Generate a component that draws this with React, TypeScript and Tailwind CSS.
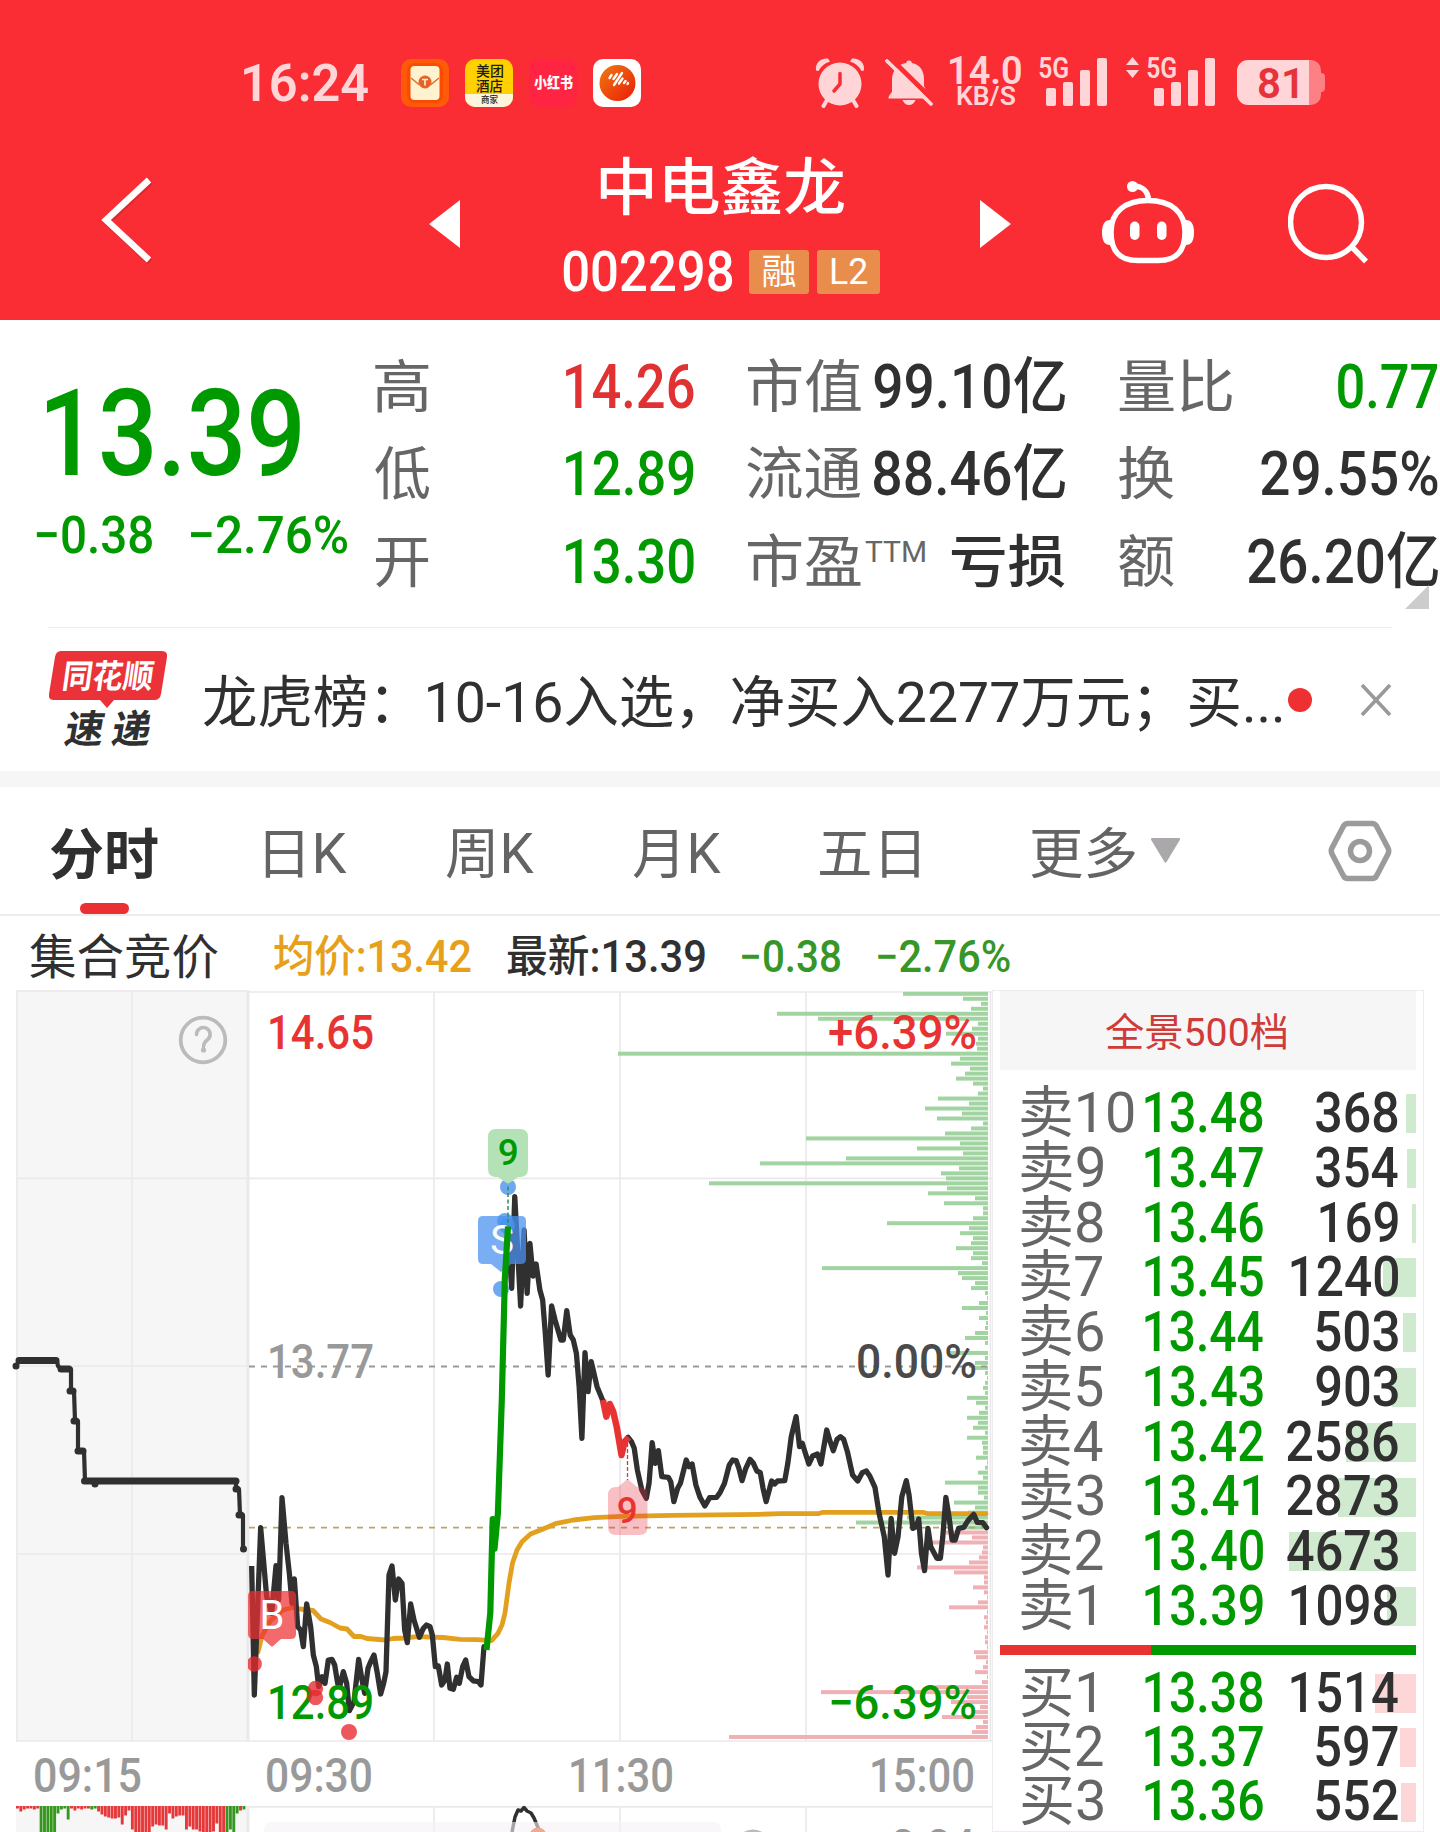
import React, { useLayoutEffect, useRef } from 'react';

const GREEN = '#009900';
const RED = '#e83333';
const INK = '#303030';

// Stretches a single line so that its visible glyphs fill the box width
function Fit({ children, className }: { children: string; className: string }) {
  const boxRef = useRef<HTMLDivElement>(null);
  const textRef = useRef<HTMLSpanElement>(null);

  useLayoutEffect(() => {
    const box = boxRef.current;
    const text = textRef.current;
    const ctx = document.createElement('canvas').getContext('2d');
    if (!box || !text || !ctx) return;
    const style = getComputedStyle(text);
    ctx.font = `${style.fontWeight} ${style.fontSize} ${style.fontFamily}`;
    const m = ctx.measureText(children);
    const scale = box.clientWidth / (m.actualBoundingBoxLeft + m.actualBoundingBoxRight);
    text.style.transform = `translateX(${m.actualBoundingBoxLeft * scale}px) scaleX(${scale})`;
  }, [children]);

  return (
    <div ref={boxRef} className={`shrink-0 leading-none ${className}`}>
      <span ref={textRef} className="block w-max origin-left whitespace-nowrap">
        {children}
      </span>
    </div>
  );
}

function AppIcons() {
  return (
    <div className="ml-[33px] flex gap-4">
      <svg width="48" height="48" viewBox="0 0 48 48">
        <rect width="48" height="48" rx="10" fill="#ff5a0a" />
        <rect x="6" y="4" width="36" height="40" rx="8" fill="#f94c02" />
        <rect x="9.500" y="7" width="29" height="34" rx="4" fill="#fff3cf" />
        <path d="M10 19l8 6.500h12l8-6.500" fill="none" stroke="#e0702c" strokeWidth="1.500" />
        <circle cx="24" cy="23" r="6.500" fill="#e5622a" />
        <path d="M21 20.500h6M24 20.500v6" stroke="#fff3cf" strokeWidth="1.600" />
      </svg>
      <div className="flex h-12 w-12 flex-col items-center overflow-hidden rounded-[10px] bg-[#ffd100] text-[#1c1c10]">
        <Fit className="mt-[5px] h-[15px] w-[27px] text-[14px] font-medium">美团</Fit>
        <Fit className="h-[15px] w-[27px] text-[14px] font-medium">酒店</Fit>
        <div className="flex w-full flex-1 justify-center bg-[#fdf6dc] pt-[2px]">
          <Fit className="w-[17px] text-[9px] font-medium">商家</Fit>
        </div>
      </div>
      <div className="flex h-12 w-12 items-center justify-center rounded-[10px] bg-[#ff2442] pt-px text-white">
        <Fit className="w-[39px] text-[15px] font-black">小红书</Fit>
      </div>
      <svg width="48" height="48" viewBox="0 0 48 48">
        <defs>
          <linearGradient id="ball" x1="0" y1="0" x2="1" y2="1">
            <stop offset="0" stopColor="#f07a10" />
            <stop offset="1" stopColor="#ea1c08" />
          </linearGradient>
        </defs>
        <rect width="48" height="48" rx="10" fill="#fff" />
        <circle cx="24.500" cy="24" r="18" fill="url(#ball)" />
        <path d="M16.500 19l2-3M20.500 20l3.500-5M21 26l8-12M26 24.500l3.500-5M31 24l1.500-2M34.500 25l.5-1" stroke="#fff" strokeWidth="2.400" strokeLinecap="round" />
      </svg>
    </div>
  );
}

function SignalBars() {
  return (
    <svg width="61" height="48" viewBox="0 0 61 48" fill="#ffd5d7">
      <rect x="0" y="30" width="10" height="18" rx="2" />
      <rect x="17" y="24" width="10" height="24" rx="2" />
      <rect x="34" y="12" width="10" height="36" rx="2" />
      <rect x="51" y="0" width="10" height="48" rx="2" />
    </svg>
  );
}

function StatusBar() {
  return (
    <div className="flex h-[51px] items-center pl-[244px] text-[#ffd5d7]">
      <Fit className="mt-[2px] w-[124px] text-[51px] font-semibold">16:24</Fit>
      <AppIcons />
      <svg className="ml-[174px]" width="50" height="51" viewBox="0 0 50 51">
        <path d="M13 1.500C5 1 0 6.500 1 13.500L3.500 14Q7 7 15 4.500ZM37 1.500C45 1 50 6.500 49 13.500L46.500 14Q43 7 35 4.500Z" fill="#ffd5d7" />
        <circle cx="25" cy="27" r="21.500" fill="#ffd5d7" />
        <path d="M12 43l-3.500 6M38 43l3.500 6" stroke="#ffd5d7" strokeWidth="4" strokeLinecap="round" />
        <path d="M25 16.500V27l-6 7" fill="none" stroke="#f92d33" strokeWidth="3.500" strokeLinecap="round" strokeLinejoin="round" />
      </svg>
      <svg className="ml-5" width="48" height="48" viewBox="0 0 48 48">
        <path d="M24 1.500c2 0 2.500 1 2.800 2.500C35 5.500 39 12 39 20v7l5 11 .5 1.500H3.500Q3 37 7 33V20C7.500 12 12 5.500 21.200 4 21.500 2.500 22 1.500 24 1.500Z" fill="#ffd5d7" />
        <path d="M17.500 41h13q-2 5-6.500 5t-6.500-5Z" fill="#ffd5d7" />
        <path d="M4 -2L50 43" stroke="#f92d33" strokeWidth="5" />
        <path d="M2 2L46 45" stroke="#ffd5d7" strokeWidth="3.800" strokeLinecap="round" />
      </svg>
      <div className="ml-[17px] flex h-[51px] w-[71px] flex-col items-center font-semibold">
        <Fit className="-mt-[5px] h-[31px] w-[71px] text-[38px]">14.0</Fit>
        <Fit className="w-[58px] text-[26px]">KB/S</Fit>
      </div>
      <div className="ml-[18px] flex h-[51px] w-[68px] items-start">
        <Fit className="-mt-1 w-[29px] text-[30px] font-semibold">5G</Fit>
        <div className="-ml-[22px] pt-px">
          <SignalBars />
        </div>
      </div>
      <div className="ml-[19px] flex h-[51px] w-[89px] items-start">
        <svg className="mr-2" width="13" height="22" viewBox="0 0 13 22" fill="#ffd5d7">
          <path d="M6.500 0L13 8H0ZM6.500 21L0 13h13Z" />
        </svg>
        <Fit className="-mt-1 w-[29px] text-[30px] font-semibold">5G</Fit>
        <div className="-ml-[22px] pt-px">
          <SignalBars />
        </div>
      </div>
      <div className="ml-[22px] flex items-center">
        <div className="flex h-[45px] w-[72px] items-center justify-center rounded-l-[11px] bg-[#ffd5d7] pl-[11px] pt-[2px] text-[#e8323a]">
          <Fit className="w-[39px] text-[42px] font-semibold">81</Fit>
        </div>
        <div className="h-[45px] w-[12px] rounded-r-[10px] bg-[#fd8085]" />
        <div className="h-[19px] w-[4px] rounded-r-[4px] bg-[#fd8085]" />
      </div>
    </div>
  );
}

function Header() {
  return (
    <header className="h-[320px] bg-[#f92d33] pt-[57px] text-white">
      <StatusBar />
      <div className="flex h-[212px] items-start pl-[100px]">
        <svg className="mt-[69px]" width="54" height="88" viewBox="0 0 54 88" fill="none" strokeWidth="6.500">
          <path d="M50 5L7 45l43 40" stroke="#c9242a" strokeOpacity=".6" />
          <path d="M49 3L6 43l43 40" stroke="#fff" />
        </svg>
        <svg className="ml-[275px] mt-[92px]" width="31" height="48" viewBox="0 0 31 48" fill="#fff">
          <path d="M31 0v48L0 24Z" />
        </svg>
        <div className="ml-[103px] flex w-[317px] flex-col items-center">
          <Fit className="mt-[50px] w-[244px] text-[62px] font-medium">中电鑫龙</Fit>
          <div className="mt-[24px] flex h-[56px] w-full items-center">
            <Fit className="w-[170px] text-[56px] font-medium">002298</Fit>
            <div className="ml-4 flex h-[44px] w-[60px] items-center justify-center rounded-[3px] bg-[#e98d4c]">
              <Fit className="w-[33px] text-[35px]">融</Fit>
            </div>
            <div className="ml-2 flex h-[44px] w-[63px] items-center justify-center rounded-[3px] bg-[#e98d4c]">
              <Fit className="w-[36px] text-[36px]">L2</Fit>
            </div>
          </div>
        </div>
        <svg className="ml-[100px] mt-[92px]" width="31" height="48" viewBox="0 0 31 48" fill="#fff">
          <path d="M0 0v48l31-24Z" />
        </svg>
        <svg className="ml-[89px] mt-[70px]" width="96" height="88" viewBox="0 0 96 88" fill="none" stroke="#fff" strokeWidth="5.500">
          <path d="M48 22.500C25 22.500 11 34 11 54C11 74 20 82.500 38 82.500H58C76 82.500 85 74 85 54C85 34 71 22.500 48 22.500Z" />
          <path d="M48.500 22C48 13 42 8 33 8" />
          <circle cx="32.500" cy="8.500" r="5.500" fill="#fff" stroke="none" />
          <path d="M10 42q-8 0-8 12.500t8 12.500ZM86 42q8 0 8 12.500t-8 12.500Z" fill="#fff" stroke="none" />
          <rect x="30" y="43.500" width="9.500" height="18.500" rx="4.700" fill="#fff" stroke="none" />
          <rect x="57" y="43.500" width="9.500" height="18.500" rx="4.700" fill="#fff" stroke="none" />
        </svg>
        <svg className="ml-[92px] mt-[75px]" width="80" height="82" viewBox="0 0 80 82" fill="none" stroke="#fff" strokeWidth="5.500">
          <circle cx="38" cy="39" r="35.500" />
          <path d="M63 63l15 15.500" />
        </svg>
      </div>
    </header>
  );
}

function StatRow({ label, children }: { label: React.ReactNode; children: React.ReactNode }) {
  return (
    <div className="flex h-[87.300px] items-center justify-between">
      {label}
      {children}
    </div>
  );
}

function Quote() {
  return (
    <section className="relative flex h-[307px] text-[61px] font-medium text-[#303030]">
      <div className="w-[375px] text-[#009900]">
        <Fit className="ml-[47px] mt-[54px] w-[253px] text-[121px]">13.39</Fit>
        <div className="ml-[36px] mt-[15px] flex gap-[38px]">
          <Fit className="w-[116px] text-[52px]">−0.38</Fit>
          <Fit className="w-[157px] text-[52px]">−2.76%</Fit>
        </div>
      </div>
      <div className="w-[319px] pt-[24px]">
        <StatRow label={<Fit className="w-[54px] text-[57px] font-normal text-[#666]">高</Fit>}>
          <Fit className="w-[128px] text-[#e03232]">14.26</Fit>
        </StatRow>
        <StatRow label={<Fit className="w-[55px] text-[57px] font-normal text-[#666]">低</Fit>}>
          <Fit className="w-[128px] text-[#009900]">12.89</Fit>
        </StatRow>
        <StatRow label={<Fit className="w-[54px] text-[57px] font-normal text-[#666]">开</Fit>}>
          <Fit className="w-[128px] text-[#009900]">13.30</Fit>
        </StatRow>
      </div>
      <div className="ml-[53px] w-[318px] pt-[24px]">
        <StatRow label={<Fit className="w-[114px] text-[57px] font-normal text-[#666]">市值</Fit>}>
          <Fit className="w-[191px]">99.10亿</Fit>
        </StatRow>
        <StatRow label={<Fit className="w-[114px] text-[57px] font-normal text-[#666]">流通</Fit>}>
          <Fit className="w-[191px]">88.46亿</Fit>
        </StatRow>
        <StatRow
          label={
            <div className="flex font-normal text-[#666]">
              <Fit className="w-[114px] text-[57px]">市盈</Fit>
              <Fit className="ml-1 mt-[3px] w-[60px] text-[30px]">TTM</Fit>
            </div>
          }
        >
          <Fit className="w-[114px] text-[57px]">亏损</Fit>
        </StatRow>
      </div>
      <div className="ml-[54px] w-[319px] pt-[24px]">
        <StatRow label={<Fit className="w-[113px] text-[57px] font-normal text-[#666]">量比</Fit>}>
          <Fit className="w-[100px] text-[#009900]">0.77</Fit>
        </StatRow>
        <StatRow label={<Fit className="w-[55px] text-[57px] font-normal text-[#666]">换</Fit>}>
          <Fit className="w-[177px]">29.55%</Fit>
        </StatRow>
        <StatRow label={<Fit className="w-[55px] text-[57px] font-normal text-[#666]">额</Fit>}>
          <Fit className="w-[190px]">26.20亿</Fit>
        </StatRow>
      </div>
      <svg className="absolute right-[11px] top-[265px]" width="24" height="24" viewBox="0 0 24 24">
        <path d="M24 0v24H0Z" fill="#cccccc" />
      </svg>
    </section>
  );
}

function NewsBar() {
  return (
    <section>
      <div className="mx-[48px] h-px bg-[#ececec]" />
      <div className="flex h-[143px] items-center pl-[49px]">
        <svg className="-mt-px" width="118" height="96" viewBox="0 0 118 96">
          <path d="M12 0H112Q119 0 118 6L112 43Q111 49 105 49H65L58 57L51 49H5Q-1 49 0 43L6 6Q7 0 12 0Z" fill="#ea3238" />
          <text transform="translate(12 37) skewX(-8)" textLength="91" lengthAdjust="spacingAndGlyphs" fontSize="33" fontWeight="700" fill="#fff">
            同花顺
          </text>
          <text transform="translate(14 92) skewX(-10)" textLength="86" lengthAdjust="spacing" fontSize="39" fontWeight="700" fill="#303030">
            速递
          </text>
        </svg>
        <Fit className="ml-[36px] mt-[6px] w-[1079px] text-[56px] text-[#303030]">龙虎榜：10-16入选，净买入2277万元；买...</Fit>
        <div className="ml-[6px] h-6 w-6 rounded-full bg-[#ee3033]" />
        <svg className="ml-[48px]" width="32" height="32" viewBox="0 0 32 32">
          <path d="M2 1l28 30M30 1L2 31" stroke="#999" strokeWidth="3.600" />
        </svg>
      </div>
      <div className="h-4 bg-[#f6f6f6]" />
    </section>
  );
}

function Tabs() {
  return (
    <nav className="flex h-[129px] items-center border-b-2 border-[#ededed] pl-[50px] text-[55px] text-[#646464]">
      <div className="flex h-full flex-col items-center">
        <Fit className="mt-[41px] w-[108px] font-bold text-[#303030]">分时</Fit>
        <div className="mt-[20px] h-[12px] w-[49px] rounded-full bg-[#ea3033]" />
      </div>
      <Fit className="ml-[107px] mt-[8px] w-[82px]">日K</Fit>
      <Fit className="ml-[99px] mt-[8px] w-[88px]">周K</Fit>
      <Fit className="ml-[99px] mt-[8px] w-[88px]">月K</Fit>
      <Fit className="ml-[99px] mt-[8px] w-[99px]">五日</Fit>
      <Fit className="ml-[112px] mt-[8px] w-[104px]">更多</Fit>
      <svg className="ml-[16px]" width="29" height="25" viewBox="0 0 29 25">
        <path d="M1 0h27q1.500 0 .8 2L15.500 24q-1 1-2 0L.2 2Q-.5 0 1 0Z" fill="#aaa8ab" />
      </svg>
      <svg className="ml-[148px]" width="64" height="62" viewBox="0 0 64 62" fill="none" stroke="#9c9a9d" strokeWidth="5.500">
        <path d="M20 3.500H44Q47 3.500 48.500 6L60 28Q61.500 31 60 34L48.500 56Q47 58.500 44 58.500H20Q17 58.500 15.500 56L4 34Q2.500 31 4 28L15.500 6Q17 3.500 20 3.500Z" />
        <circle cx="32" cy="31" r="9.500" />
      </svg>
    </nav>
  );
}

function Legend() {
  return (
    <div className="flex h-[72px] items-center pl-[30px] pt-[9px] text-[44px] font-medium text-[#303030]">
      <Fit className="mt-[3px] w-[188px] text-[48px] font-normal">集合竞价</Fit>
      <Fit className="ml-[56px] w-[197px] text-[#e6a01a]">均价:13.42</Fit>
      <Fit className="ml-[36px] w-[198px]">最新:13.39</Fit>
      <Fit className="ml-[37px] w-[98px] text-[#369626]">−0.38</Fit>
      <Fit className="ml-[38px] w-[132px] text-[#369626]">−2.76%</Fit>
    </div>
  );
}

// volume at price, top of the chart to the bottom
const sellProfile = [
  85, 25, 7, 17, 211, 170, 10, 16, 42, 10, 12, 11, 370, 28, 37, 18, 23, 32, 15, 5, 10, 50, 19, 63, 26, 51, 5, 17, 43,
  182, 28, 71, 25, 142, 228, 29, 47, 42, 279, 41, 60, 13, 44, 5, 5, 15, 101, 19, 28, 15, 17, 32, 15, 17, 6, 166, 30,
  26, 13, 17, 3, 1, 9, 26, 2, 9, 2, 3, 13, 23, 3, 0, 39, 3, 13, 13, 3, 1, 3, 5, 3, 21, 12, 3, 9, 21, 10, 15, 3, 21, 6,
  5, 5, 12, 1, 3, 10, 5, 43, 10, 10, 4, 34, 13, 20, 81, 132, 22,
];
const buyProfile = [
  42, 16, 57, 5, 6, 9, 19, 71, 34, 4, 4, 15, 4, 1, 10, 39, 1, 4, 2, 4, 1, 3, 3, 1, 14, 12, 2, 5, 13, 1, 6, 53, 167, 21,
  37, 8, 15, 46, 5, 12, 16, 259,
];

// matched volume in the opening auction, negative means green
const auctionVolume = [
  1, 4, 2, 1, 1, 2, 1, -30, -30, -30, -30, -30, -6, -2, -1, -12, 1, 3, 1, 2, 1, 1, -2, -1, 4, 7, 9, 10, 11, 11, 10, 17,
  8, 3, 22, 28, 28, 28, 27, 26, 19, 17, 18, 18, 22, 6, 11, 9, 8, 8, 22, 19, 22, 22, 24, 27, 25, 28, 24, 16, 28, 28, -28,
  -22, -28, -6, 3, -2,
];

function MinuteChart() {
  const all = [...sellProfile, ...buyProfile];
  return (
    <svg className="block shrink-0" width="992" height="844" viewBox="0 988 992 844">
      <rect x="16" y="990" width="232" height="751" fill="#f6f6f6" />
      <rect x="16" y="1806" width="232" height="26" fill="#f6f6f6" />
      <g fill="none" stroke="#ece9eb" strokeWidth="1.700">
        <path d="M16 991H248M248 992H992M16 1178.300H992M16 1366H248M16 1554H992M16 1741H992M16 1806.800H992" />
        <path d="M17 990V1741M132 990V1741M434 992V1741M620 992V1741M806 992V1741M990.500 992V1741" />
        <path d="M434 1806V1832M620 1806V1832M806 1806V1832" />
        <path d="M248 990V1741M248 1806V1832" strokeWidth="3" />
      </g>
      {all.map((w, i) => (
        <rect key={i} x={988 - w} y={991.800 + i * 4.988} width={w} height="4" fill={i < sellProfile.length ? '#a1d4a1' : '#f0b1b4'} />
      ))}
      <path d="M249 1366.500H988" stroke="#999" strokeWidth="2" strokeDasharray="6 6" />
      <path d="M249 1527.700H988" stroke="#b8a468" strokeWidth="1.800" strokeDasharray="6 6" />

      {/* price labels */}
      <g fontSize="48" fontWeight="500" fill={RED}>
        <text x="267" y="1049" textLength="107" lengthAdjust="spacingAndGlyphs">14.65</text>
        <text x="267" y="1378" fill="#999" textLength="107" lengthAdjust="spacingAndGlyphs">13.77</text>
        <text x="828" y="1049" textLength="149" lengthAdjust="spacingAndGlyphs">+6.39%</text>
        <text x="856" y="1378" fill="#4a4a4a" textLength="121" lengthAdjust="spacingAndGlyphs">0.00%</text>
      </g>
      <g fontSize="48" fontWeight="500" fill="#999">
        <text x="33" y="1792" textLength="109" lengthAdjust="spacingAndGlyphs">09:15</text>
        <text x="265" y="1792" textLength="108" lengthAdjust="spacingAndGlyphs">09:30</text>
        <text x="568" y="1792" textLength="106" lengthAdjust="spacingAndGlyphs">11:30</text>
        <text x="869" y="1792" textLength="106" lengthAdjust="spacingAndGlyphs">15:00</text>
      </g>
      <circle cx="203" cy="1040" r="22.300" fill="none" stroke="#bbb" strokeWidth="3.800" />
      <path d="M196.500 1034.500a6.800 6.800 0 1 1 11 5.200q-4 3-4 7" fill="none" stroke="#bbb" strokeWidth="3.600" strokeLinecap="round" />
      <circle cx="203.500" cy="1050" r="2.600" fill="#bbb" />

      {/* call auction */}
      <g fill="none" stroke={INK} strokeLinejoin="round" strokeLinecap="round">
        <path d="M16 1366L19 1361H57L58 1366L61 1369H71V1391H74L75 1421H78V1451H84L85 1481H95L98 1481H236V1489H239L240 1515H243V1548" strokeWidth="4.200" />
        <path d="M19 1360.500H56M61 1369H69M84.500 1481H236M95 1484V1484M16 1366V1366M70 1391H73M74 1421H76M78 1451H83M236 1489H237M239 1515H241M243.500 1549V1549" strokeWidth="7" />
      </g>

      {/* average price */}
      <g fill="none" stroke="#e3a01e" strokeWidth="4.800" strokeLinejoin="round" strokeLinecap="round">
        <path d="M258 1652L262 1636L270 1621L283 1610L293 1607.500L300 1609L313 1610.500L321 1619L330 1622.500L340 1628L347 1629L354 1636.500H361L367 1638.500L385 1640L393 1638.500L405 1638L417 1636.700L443 1637.500L460 1639.300L477 1639.700L491.500 1640.700L498 1633.300L502 1625L505 1613L509 1583L512.500 1563L517 1550L522 1541.700L530.500 1534L542.500 1529.300L556.500 1523.300L573.500 1520L594 1517.700L622 1516.300L672 1515.300L760 1514.300L780 1513.700H818L823 1512.300H923L928 1513.700H986" />
      </g>

      {/* price */}
      <g fill="none" stroke={INK} strokeWidth="5.300" strokeLinejoin="round">
        <g transform="translate(0 1400) scale(.33333)">
          <polyline
            vectorEffect="non-scaling-stroke"
            points="755,498 763,885 782,383 800,590 815,640 828,497 836,600 846,293 858,430 868,520 876,610 883,537 893,680 902,690 910,740 920,612 932,680 940,765 949,800 956,860 966,830 975,850 985,780 996,778 1004,795 1013,850 1019,860 1030,815 1040,850 1048,932 1062,905 1067,860 1076,778 1086,840 1094,880 1104,805 1112,785 1122,765 1132,820 1142,882 1151,850 1158,815 1167,525 1176,498 1186,600 1196,537 1206,550 1214,690 1222,728 1232,612 1242,660 1258,712 1270,685 1280,675 1290,680 1297,705 1306,800 1315,798 1325,855 1335,840 1342,792 1350,865 1360,868 1370,832 1378,850 1388,800 1397,780 1407,830 1420,843 1435,845 1443,855 1452,740 1458,740"
          />
        </g>
        <g transform="translate(460 980) scale(.34436 .33333)">
          <polyline
            vectorEffect="non-scaling-stroke"
            points="139,740 150,925 159,650 176,978 186,750 195,940 203,790 212,888 221,852 232,930 240,960 247,1050 256,1185 266,978 276,1020 293,1080 300,1080 310,992 320,1065 329,1080 338,1120 346,1220 354,1375 363,1118 372,1235 381,1145 398,1220 410,1250 416,1265"
          />
        </g>
        <g transform="translate(460 1400) scale(.34436 .33333)">
          <polyline
            vectorEffect="non-scaling-stroke"
            strokeLinecap="round"
            points="488,112 498,125 506,145 515,210 528,270 541,295 549,250 558,128 567,190 576,152 586,230 605,232 612,245 621,305 632,265 640,250 657,180 665,200 674,192 685,255 697,292 711,318 725,293 745,292 755,278 768,250 782,195 792,180 802,182 810,205 819,242 830,205 842,178 852,190 862,213 872,218 880,265 889,305 905,243 914,252 922,243 943,242 952,190 962,110 976,50 986,140 994,130 1003,160 1013,192 1024,168 1038,162 1048,192 1065,90 1075,125 1084,152 1095,118 1105,110 1114,118 1125,155 1140,225 1155,243 1168,218 1180,213 1190,228 1205,262 1217,340 1232,410 1243,525 1252,355 1262,460 1272,410 1283,290 1296,242 1304,285 1315,385 1325,380 1332,357 1340,460 1349,512 1359,385 1367,440 1385,475 1395,475 1402,410 1411,292 1420,350 1429,420 1438,420 1448,385 1463,382 1475,362 1492,343 1502,367 1518,368 1529,383"
          />
          <polyline vectorEffect="non-scaling-stroke" stroke={RED} strokeWidth="6.500" points="415,0 425,50 435,12 445,35 455,80 469,165 478,125 490,112" />
        </g>
      </g>

      {/* trade markers */}
      <g fill="#4a92ec" fillOpacity=".8">
        <circle cx="508" cy="1187" r="8" />
        <circle cx="505" cy="1221" r="8" />
        <circle cx="507" cy="1226" r="8" />
        <circle cx="501" cy="1289" r="8" />
      </g>
      <path d="M483 1216H521Q526 1216 526 1221V1259Q526 1264 521 1264H511L501 1272L491 1264H483Q478 1264 478 1259V1221Q478 1216 483 1216Z" fill="#4a92f2" fillOpacity=".74" />
      <text x="502" y="1254" fontSize="40" fill="#fff" textAnchor="middle">S</text>
      <path d="M486.500 1650L490.300 1613L492.700 1519L494.500 1549L497.900 1513L501.800 1400L504.800 1280L508 1226.500" fill="none" stroke={GREEN} strokeWidth="6.200" strokeLinejoin="round" />
      <path d="M508 1180V1227" stroke="#2f8f5a" strokeWidth="1.500" strokeDasharray="4 2.500" />
      <path d="M496 1129H520Q528 1129 528 1137V1169Q528 1177 520 1177H518L508 1184L498 1177H496Q488 1177 488 1169V1137Q488 1129 496 1129Z" fill="#b4e1b5" />
      <text x="508.300" y="1164.500" fontSize="37" fontWeight="500" fill={GREEN} textAnchor="middle">9</text>

      <path d="M627.500 1437V1480" stroke="#d03a42" strokeWidth="1.300" strokeDasharray="4 2" />
      <path d="M616 1487H618L627.500 1479L637 1487H639.500Q647.500 1487 647.500 1495V1527Q647.500 1535 639.500 1535H616Q608 1535 608 1527V1495Q608 1487 616 1487Z" fill="#e8303c" fillOpacity=".3" />
      <text x="627.300" y="1523" fontSize="37" fontWeight="500" fill={RED} textAnchor="middle">9</text>

      <path d="M253 1591H291Q296 1591 296 1596V1634Q296 1639 291 1639H281L272 1647L263 1639H253Q248 1639 248 1634V1596Q248 1591 253 1591Z" fill="#ef3035" fillOpacity=".72" />
      <text x="272" y="1629" fontSize="40" fill="#fff" textAnchor="middle">B</text>
      <g fontSize="48" fontWeight="500" fill={GREEN}>
        <text x="267" y="1719" textLength="107" lengthAdjust="spacingAndGlyphs">12.89</text>
        <text x="828" y="1719" textLength="149" lengthAdjust="spacingAndGlyphs">−6.39%</text>
      </g>
      <g fill="#e7282d" fillOpacity=".78">
        <path d="M248 1659.500A7.700 7.700 0 1 1 248 1668.500Z" />
        <circle cx="315.500" cy="1688.500" r="7.700" />
        <circle cx="315.500" cy="1697.500" r="7.700" />
        <circle cx="349" cy="1732" r="8" />
      </g>

      {/* volume pane */}
      {auctionVolume.map((v, i) => (
        <rect key={i} x={16 + i * 3.380} y="1806" width="2.900" height={Math.abs(v) + 1.500} fill={v < 0 ? '#35971f' : '#e5383a'} />
      ))}
      <path d="M512 1832L515 1817L518 1810L521 1811L524 1807.500L527 1811L531 1813L534 1818L539 1830" fill="none" stroke={INK} strokeWidth="3.500" strokeLinejoin="round" />
      <path d="M264 1832V1830Q264 1822 272 1822H713Q721 1822 721 1830V1832Z" fill="#f7f2f6" fillOpacity=".6" />
      <circle cx="538" cy="1836" r="8.500" fill="#efa98f" />
      <circle cx="753" cy="1848" r="17" fill="none" stroke="#bbb" strokeWidth="3" />
      <text x="891" y="1863" fontSize="48" fontWeight="500" fill="#999" textLength="84" lengthAdjust="spacingAndGlyphs">2.24</text>
    </svg>
  );
}

interface Level {
  label: string;
  price: string;
  volume: string;
  depth: number;
}

const asks: Level[] = [
  { label: '卖10', price: '13.48', volume: '368', depth: 10 },
  { label: '卖9', price: '13.47', volume: '354', depth: 9 },
  { label: '卖8', price: '13.46', volume: '169', depth: 4 },
  { label: '卖7', price: '13.45', volume: '1240', depth: 33 },
  { label: '卖6', price: '13.44', volume: '503', depth: 13 },
  { label: '卖5', price: '13.43', volume: '903', depth: 24 },
  { label: '卖4', price: '13.42', volume: '2586', depth: 70 },
  { label: '卖3', price: '13.41', volume: '2873', depth: 78 },
  { label: '卖2', price: '13.40', volume: '4673', depth: 127 },
  { label: '卖1', price: '13.39', volume: '1098', depth: 29 },
];

const bids: Level[] = [
  { label: '买1', price: '13.38', volume: '1514', depth: 41 },
  { label: '买2', price: '13.37', volume: '597', depth: 16 },
  { label: '买3', price: '13.36', volume: '552', depth: 15 },
];

function LevelRow({ level, side }: { level: Level; side: 'ask' | 'bid' }) {
  // a "1" at either end is narrower than the other digits
  const labelWidth = level.label.length > 2 ? 'w-[113px]' : level.label.endsWith('1') ? 'w-[73px]' : 'w-[82px]';
  const priceWidth = level.price.endsWith('1') ? 'w-[113px]' : 'w-[118px]';
  const volumeWidth =
    level.volume.length < 4
      ? level.volume.startsWith('1')
        ? 'w-[78px]'
        : 'w-[82px]'
      : level.volume.startsWith('1')
        ? 'w-[107px]'
        : 'w-[111px]';
  return (
    <div className={`relative flex items-center text-[56px] font-medium ${side === 'ask' ? 'h-[54.800px]' : 'h-[54.300px]'}`}>
      <div
        className={`absolute right-0 top-[9px] h-[39px] ${side === 'ask' ? 'bg-[#cfeacf]' : 'bg-[#fdd6d8]'}`}
        style={{ width: level.depth }}
      />
      <div className="w-[145px] pl-[21px]">
        <Fit className={`mt-px font-normal text-[#666] ${labelWidth}`}>{level.label}</Fit>
      </div>
      <Fit className={`mt-px text-[#009900] ${priceWidth}`}>{level.price}</Fit>
      <div className="relative ml-auto mr-[18px]">
        <Fit className={`mt-px text-[#303030] ${volumeWidth}`}>{level.volume}</Fit>
      </div>
    </div>
  );
}

function OrderBook() {
  return (
    <aside className="mt-[2px] h-[842px] w-[432px] shrink-0 border border-[#eeecee] px-[7px]">
      <div className="h-[79px] bg-[#f6f6f6] pl-[106px] pt-[23px]">
        <Fit className="w-[181px] text-[39px] text-[#d03a38]">全景500档</Fit>
      </div>
      <div className="mt-[15px]">
        {asks.map((level) => (
          <LevelRow key={level.label} level={level} side="ask" />
        ))}
      </div>
      <div className="mt-[12px] flex h-[10px]">
        <div className="w-[151px] bg-[#e83333]" />
        <div className="flex-1 bg-[#009900]" />
      </div>
      <div className="mt-[10px]">
        {bids.map((level) => (
          <LevelRow key={level.label} level={level} side="bid" />
        ))}
      </div>
    </aside>
  );
}

export default function App() {
  return (
    <div className="h-[1832px] w-[1440px] overflow-hidden bg-white font-[Roboto,'Noto_Sans_CJK_SC',sans-serif]">
      <Header />
      <Quote />
      <NewsBar />
      <Tabs />
      <Legend />
      <div className="flex">
        <MinuteChart />
        <OrderBook />
      </div>
    </div>
  );
}
